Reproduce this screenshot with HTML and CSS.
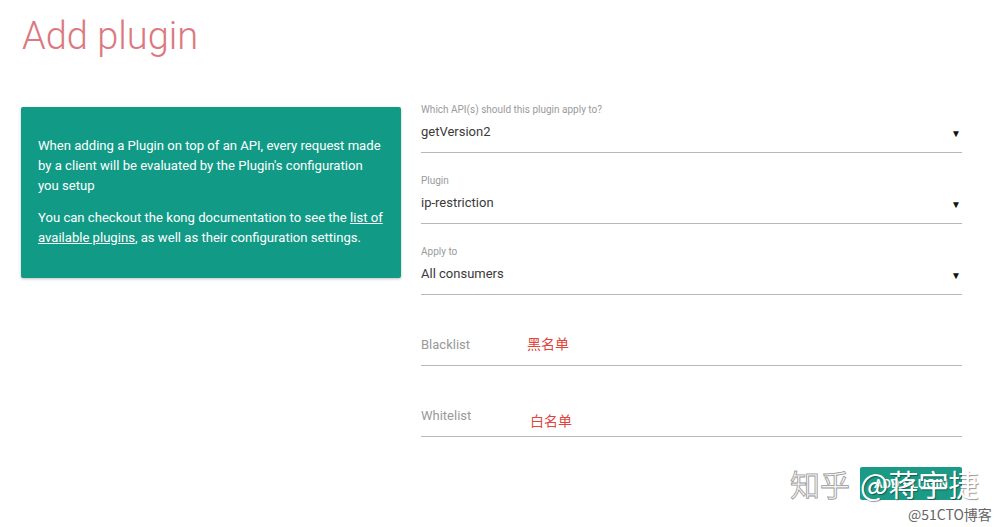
FILE: index.html
```html
<!DOCTYPE html>
<html lang="en">
<head>
<meta charset="utf-8">
<title>Add plugin</title>
<link rel="stylesheet" href="styles.css">
</head>
<body>
<div class="page">
  <h1 class="title">Add plugin</h1>
  <div class="main">
    <div class="info-card">
      <p>When adding a Plugin on top of an API, every request made by a client will be evaluated by the Plugin's configuration you setup</p>
      <p>You can checkout the kong documentation to see the <a href="#">list of</a> <a href="#">available plugins</a>, as well as their configuration settings.</p>
    </div>
    <form class="form">
      <div class="field">
        <label class="label">Which API(s) should this plugin apply to?</label>
        <div class="select"><span>getVersion2</span><span class="arrow">▼</span></div>
      </div>
      <div class="field">
        <label class="label">Plugin</label>
        <div class="select"><span>ip-restriction</span><span class="arrow">▼</span></div>
      </div>
      <div class="field">
        <label class="label">Apply to</label>
        <div class="select"><span>All consumers</span><span class="arrow">▼</span></div>
      </div>
      <div class="field">
        <div class="input"><span class="placeholder">Blacklist</span></div>
        <span class="note note-black">黑名单</span>
      </div>
      <div class="field">
        <div class="input"><span class="placeholder">Whitelist</span></div>
        <span class="note note-white">白名单</span>
      </div>
      <div class="actions">
        <button type="button" class="btn">ADD PLUGIN</button>
        <div class="watermark">
          <span class="wm-zhihu">知乎</span><span class="wm-name">@蒋宇捷</span>
        </div>
        <div class="wm-51">@51CTO博客</div>
      </div>
    </form>
  </div>
</div>
</body>
</html>
```

FILE: styles.css
```css
* { box-sizing: border-box; }
html, body { margin: 0; padding: 0; background: #fff; }
body {
  font-family: Roboto, "Liberation Sans", "Noto Sans CJK SC", sans-serif;
  color: #333;
  width: 1000px;
  height: 527px;
  overflow: hidden;
}
.page { padding: 0 0 0 21px; }
.title {
  margin: 0;
  padding-top: 11px;
  height: 82px;
  font-size: 38px;
  line-height: 50px;
  font-weight: 300;
  color: #dc7980;
  padding-left: 1px;
}
.main {
  display: flex;
  align-items: flex-start;
  gap: 20px;
}
.info-card {
  width: 380px;
  margin-top: 25px;
  background: #119a86;
  color: #fff;
  padding: 29px 17px 30px 17px;
  font-size: 13.1px;
  line-height: 20px;
  box-shadow: 0 1px 3px rgba(0,0,0,0.25);
  border-radius: 2px;
}
.info-card p { margin: 0; }
.info-card p + p { margin-top: 12px; }
.info-card a { color: #fff; text-decoration: underline; }
.form { width: 541px; }
.field {
  position: relative;
  padding: 21px 0 10px 0;
  border-bottom: 1px solid #b8b8b8;
}
.label {
  display: block;
  font-size: 10px;
  line-height: 14px;
  color: #9a9a9a;
  margin-bottom: 5px;
}
.select, .input {
  display: flex;
  justify-content: space-between;
  align-items: center;
  font-size: 13px;
  line-height: 20px;
  color: #3a3a3a;
}
.input { margin-top: 19px; }
.arrow {
  font-size: 10px;
  color: #111;
  padding-right: 1px;
  position: relative;
  top: 2px;
}
.placeholder { color: #999; }
.note {
  position: absolute;
  font-size: 14px;
  line-height: 20px;
  color: #e0463c;
  font-family: "Noto Sans CJK SC", sans-serif;
}
.note-black { left: 106px; top: 38px; }
.note-white { left: 109px; top: 44px; }
.actions {
  position: relative;
  display: flex;
  justify-content: flex-end;
  padding-top: 30px;
}
.btn {
  width: 102px;
  height: 33px;
  border: none;
  border-radius: 2px;
  background: #1b9a86;
  color: #fff;
  font-family: Roboto, sans-serif;
  font-size: 13px;
  font-weight: 500;
}
.watermark {
  position: absolute;
  left: 369px;
  top: 28px;
  font-family: "Noto Sans CJK SC", sans-serif;
  font-size: 30px;
  line-height: 36px;
  white-space: nowrap;
}
.wm-zhihu {
  color: #f4f4f4;
  -webkit-text-stroke: 0.8px #999;
  margin-right: 10px;
}
.wm-name {
  color: #fff;
  text-shadow: 1px 1px 1px rgba(0,0,0,0.4);
}
.wm-51 {
  position: absolute;
  left: 487px;
  top: 69px;
  font-size: 14px;
  line-height: 16px;
  color: #666;
  font-family: "Noto Sans CJK SC", sans-serif;
  white-space: nowrap;
}
```
